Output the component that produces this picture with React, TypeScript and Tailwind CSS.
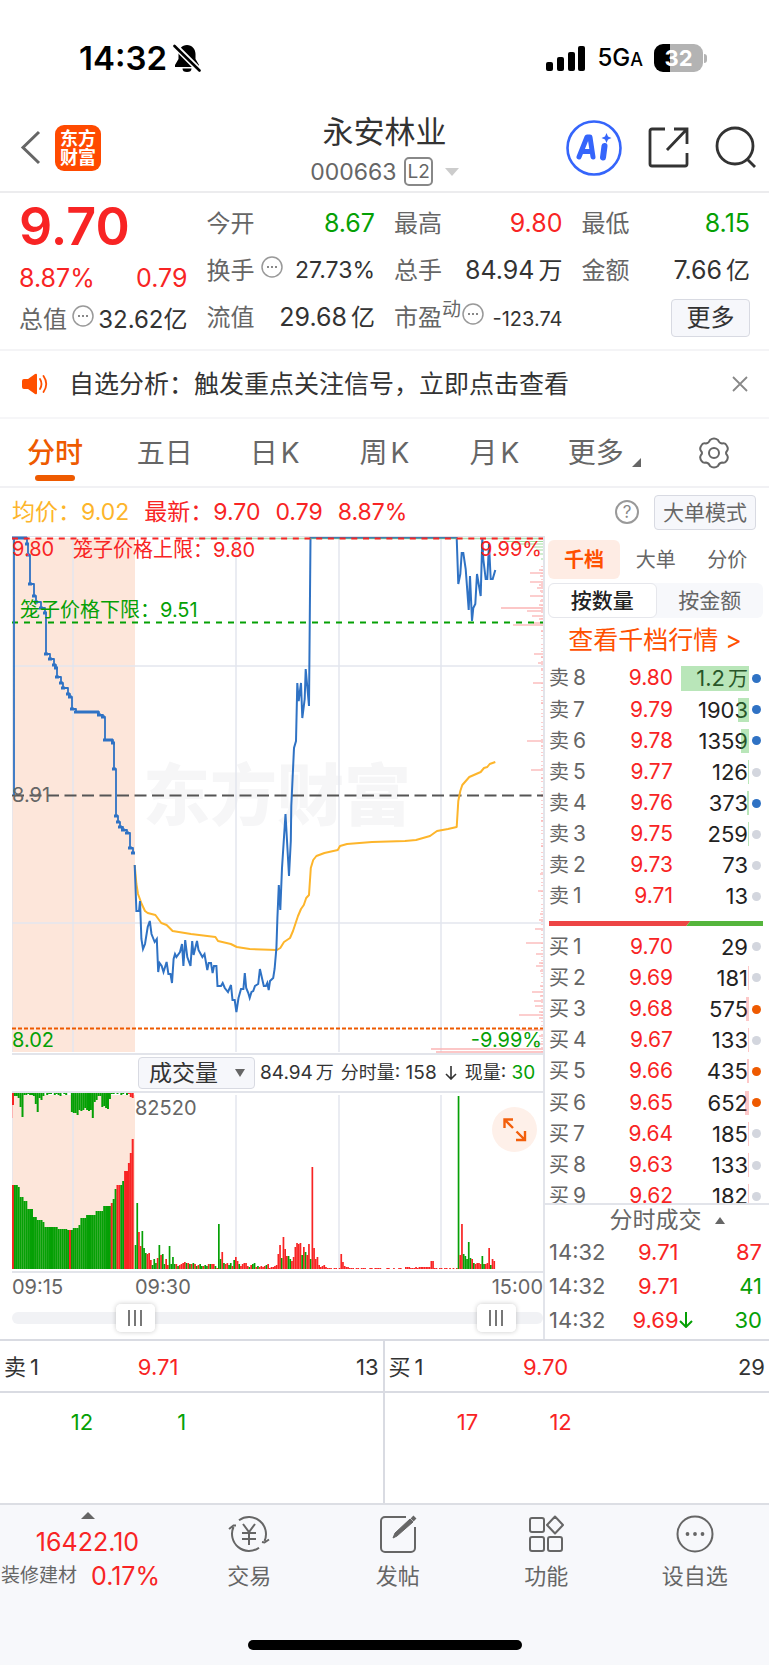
import { useState } from 'react';

type Level = { name: string; price: string; qty: string; unit?: string; bar: number; dot: string };

const RED = 'text-[#f82424]';
const GREEN = 'text-[#05a005]';

const DOT_BLUE = 'bg-[#2f72c4]';
const DOT_ORANGE = 'bg-[#ee5a00]';
const DOT_GRAY = 'bg-[#d3d6de]';

const sells: Level[] = [
  { name: '卖8', price: '9.80', qty: '1.2', unit: '万', bar: 68, dot: DOT_BLUE },
  { name: '卖7', price: '9.79', qty: '1903', bar: 11, dot: DOT_BLUE },
  { name: '卖6', price: '9.78', qty: '1359', bar: 8, dot: DOT_BLUE },
  { name: '卖5', price: '9.77', qty: '126', bar: 1, dot: DOT_GRAY },
  { name: '卖4', price: '9.76', qty: '373', bar: 2, dot: DOT_BLUE },
  { name: '卖3', price: '9.75', qty: '259', bar: 1, dot: DOT_GRAY },
  { name: '卖2', price: '9.73', qty: '73', bar: 0, dot: DOT_GRAY },
  { name: '卖1', price: '9.71', qty: '13', bar: 0, dot: DOT_GRAY },
];

const buys: Level[] = [
  { name: '买1', price: '9.70', qty: '29', bar: 0, dot: DOT_GRAY },
  { name: '买2', price: '9.69', qty: '181', bar: 1, dot: DOT_GRAY },
  { name: '买3', price: '9.68', qty: '575', bar: 3, dot: DOT_ORANGE },
  { name: '买4', price: '9.67', qty: '133', bar: 1, dot: DOT_GRAY },
  { name: '买5', price: '9.66', qty: '435', bar: 2, dot: DOT_ORANGE },
  { name: '买6', price: '9.65', qty: '652', bar: 4, dot: DOT_ORANGE },
  { name: '买7', price: '9.64', qty: '185', bar: 1, dot: DOT_GRAY },
  { name: '买8', price: '9.63', qty: '133', bar: 1, dot: DOT_GRAY },
  { name: '买9', price: '9.62', qty: '182', bar: 1, dot: DOT_GRAY },
];

const trades = [
  { time: '14:32', price: '9.71', qty: '87', color: RED, down: false },
  { time: '14:32', price: '9.71', qty: '41', color: GREEN, down: false },
  { time: '14:32', price: '9.69', qty: '30', color: GREEN, down: true },
];

// Call auction prices, drawn as steps
const auction: [number, number][] = [
  [2, 2], [13, 2], [15, 8], [16, 19], [18, 48], [22, 60], [24, 66], [29, 72], [33, 77], [34, 118],
  [38, 123], [42, 129], [44, 132], [45, 141], [49, 147], [51, 152], [56, 158], [58, 161], [60, 173],
  [64, 176], [85, 176], [87, 179], [91, 181], [93, 204], [99, 204], [101, 207], [102, 233],
  [104, 280], [106, 286], [108, 291], [111, 294], [115, 297], [118, 312], [121, 317],
];
const auctionPath = 'M2 259V2' + auction.map(([x, y]) => `H${x}V${y}`).join('') + 'H123';
const auctionMarks = auction.map(([x, y]) => `M${x - 2} ${y}h4`).join('') + 'M2 2H13M64 176H85M93 204H99';

const priceLine =
  '122.7,329 124.4,375 127,375 128,365 129.4,403 131,413 133,408 135.7,391 137.8,385 139.5,398 142.7,406 144.8,403 146.2,436 147.6,427 149.7,430 151.5,436 154.6,426 156.4,438 158.5,438 160,447 161.6,423 163,418 164.4,421 168,416 170,408 171.4,430 173.2,404 175.3,421 178.5,430 180.2,405 181.6,419 185,405 186.5,414 190.4,421 192.5,418 195.3,434 196.7,427 199,427 200.6,437 202,430 204.4,430 205.5,450 209,450 210.7,447 212.8,452 216,456 219,449 220.5,464 222.7,464 224.4,476 226.5,462 229,453 231.4,453 232.8,437 234.2,452 236.3,457 237.7,462 239.5,456 241.2,455 243,450 246.2,448 247.9,433 251.8,450 253.9,450 255.3,447 256.7,454 258,445 261.2,442 262.6,433 264.4,412 265.4,382 266.8,349 268.3,374 270,332 273.5,278 277,340 278.8,305 279.3,270 282,212 284,205 285.3,147 286.7,165 289,147 290.3,182 292.7,163 293.7,133 297,170 298.5,2 444.7,2 446.3,48 448.3,38 449.7,17 451.3,17 453.7,33 456.7,74 458,40 460,85 461.3,72 463.3,68 465,38 468.7,60 470.3,2 471.3,23 473.7,43 475.3,43 477,8 478.7,43 480.7,43 483.3,34';

const averageLine =
  '122.7,329 124.4,348 126,358 129.7,368 133,375 135.7,377 143.4,379 149.3,387 154.6,389 160.6,395 179,398 203.4,401 206,405 218.8,408 224.8,411 237.7,413 265,414 268.3,412 272,406 278,402 281,395 286,380 289,373 291.8,369 294.2,362 297,359 298.8,332 301.2,324 304.4,320 312.4,317 325.8,314 328,310 335,308 360,306 393,305 404,304 418,300 425,295 436,293 444.7,291 446.3,265 448.3,255 450.3,249 457.3,241 468.7,236 472,232 475.3,231 477.7,228 483.3,226';

// Volume by price on the right edge: [y, length]
const profile: [number, number][] = [
  [34, 4], [37, 13], [40, 3], [46, 13], [49, 4], [52, 6], [55, 3], [60, 13], [65, 3], [69, 4], [72, 42],
  [75, 16], [80, 11], [83, 4], [87, 10], [89, 30], [95, 2], [118, 9], [121, 2], [127, 5], [133, 2],
  [147, 10], [167, 2], [205, 16], [210, 2], [234, 12], [242, 2], [260, 2], [285, 2], [310, 2], [338, 3],
  [355, 5], [378, 3], [384, 4], [393, 8], [407, 17], [418, 7], [427, 4], [430, 7], [435, 3], [450, 3],
  [456, 11], [460, 3], [465, 9], [470, 8], [476, 4], [479, 24], [482, 4], [494, 25], [500, 4],
  [508, 8], [513, 112], [516, 107],
];

// Order volume in the auction: control points of the top edge, [x, height]
const auctionEdge: [number, number][] = [
  [0, 84], [5, 82], [8, 72], [12, 68], [16, 60], [21, 52], [25, 49], [31, 47], [33, 42], [40, 42],
  [46, 40], [55, 39], [60, 41], [67, 44], [69, 51], [75, 54], [83, 58], [91, 63], [98, 66], [100, 70],
  [102, 80], [105, 84], [111, 88], [113, 98], [116, 106], [118, 116], [120, 130],
];
const unmatched = [
  12, 3, 3, 5, 14, 24, 2, 2, 1, 2, 2, 3, 11, 19, 5, 7, 3, 0, 2, 1, 1, 0, 2, 1, 2, 3, 0, 1, 2, 0, 0, 19,
  20, 20, 22, 17, 18, 17, 15, 17, 18, 17, 25, 9, 7, 3, 3, 14, 13, 15, 16, 6, 1, 1, 0, 1, 0, 2, 1, 0, 2, 1, 4, 5,
];

// Volume per minute, negative when the price fell
const minutes = [
  -24, -66, 37, 23, -38, -21, -16, 15, 16, 9, -4, -10, -6, 11, -24, 14, -15, -5, 10, 4, -23, -5, -12, -5, 5,
  -3, 4, 5, 6, 7, -6, 6, -5, 5, -6, 5, -3, 4, -5, -3, 3, -4, -3, 5, -5, 5, 5, -3, 1, -45, -10, 17, -6, 5, 6,
  -4, -6, 3, -9, 12, 8, -5, 3, 5, 6, 6, 3, -2, 4, -5, -6, 2, -3, 2, 3, 2, 3, -4, 5, 1, 2, 2, 3, 4, 15, 24,
  -11, 32, 20, 13, -13, -10, 8, 12, 22, 26, 25, 26, -14, 22, -17, 14, 25, -10, 102, 21, 10, 12, 4, 2, 3, 4, 2,
  1, 1, 1, 0, 1, 1, 0, 1, 15, 7, 3, 2, 2, 1, 1, 1, 0, 1, 1, 0, 1, 1, 1, 0, 0, 1, 1, 0, 1, 1, 1, 1, 0, 0, 0,
  1, 1, 0, 0, 1, 0, 0, 1, 1, 0, 0, 2, 2, 2, 1, 1, 1, 2, 1, 2, 2, 2, 2, 2, 2, 2, 8, 8, 1, 1, 0, 1, 1, 0, 1, 1,
  0, 1, 0, 1, 0, 1, -173, 14, 45, -15, -13, -10, -27, -11, 10, -6, 5, 6, 6, 5, -13, -5, 5, 6, 21, -4, 10, 8,
];

function edgeAt(x: number) {
  let h = auctionEdge[0][1];
  for (const [px, ph] of auctionEdge) if (px <= x + 1) h = ph;
  return h;
}

const isRed = (x: number) => x < 1 || (x > 56 && x < 58) || (x > 98 && x < 100) || (x > 104 && x < 107) || x > 111;

function StatusBar() {
  return (
    <div className="flex h-[104px] items-center justify-between pt-3 pr-[62px] pl-[79px]">
      <div className="flex items-center gap-[6px]">
        <span className="text-[33px] leading-10 font-semibold text-black">14:32</span>
        <svg className="h-[28px] w-[28px]" viewBox="0 0 28 28">
          <path d="M14 1c-5 0-8.500 4-8.500 9v5L2 21v2h24v-2l-3.500-6v-5C22.500 5 19 1 14 1zM9.500 24.500h9a4.500 3.500 0 0 1-9 0z" />
          <path d="M1 1l26 26" stroke="#fff" strokeWidth="6" />
          <path d="M1.500 2l25 24.500" stroke="#000" strokeWidth="2.600" strokeLinecap="round" />
        </svg>
      </div>
      <div className="flex items-center gap-[11px] text-black">
        <svg className="h-[25px] w-[40px]" viewBox="0 0 40 25">
          <rect x="0" y="16" width="7" height="9" rx="2" />
          <rect x="11" y="11" width="7" height="14" rx="2" />
          <rect x="22" y="6" width="7" height="19" rx="2" />
          <rect x="32" y="0" width="7" height="25" rx="2" />
        </svg>
        <span className="text-2xl leading-8 font-medium">
          5G<span className="text-lg">A</span>
        </span>
        <div className="flex items-center gap-px">
          <div className="flex h-[28px] w-[49px] items-center justify-center rounded-[9px] bg-[linear-gradient(90deg,#000_16px,#b3b3b3_16px)] text-[22px] leading-7 font-bold text-white">
            32
          </div>
          <div className="h-[9px] w-[3px] rounded-r-full bg-[#b3b3b3]" />
        </div>
      </div>
    </div>
  );
}

function Header() {
  return (
    <header className="flex h-[89px] items-center justify-between border-b-2 border-[#ececee] px-[12px]">
      <div className="flex flex-1 items-center gap-[14px]">
        <button aria-label="返回" className="ml-2">
          <svg className="h-[35px] w-[21px]" viewBox="0 0 21 35" fill="none" stroke="#666" strokeWidth="3">
            <path d="M19 2L3 17.500L19 33" />
          </svg>
        </button>
        <div className="flex h-[46px] w-[46px] flex-col items-center justify-center rounded-[9px] bg-[#ff4a00] text-[18px] leading-[19px] font-bold text-white">
          <span>东方</span>
          <span>财富</span>
        </div>
      </div>
      <div className="flex flex-col items-center pt-[6px]">
        <h1 className="text-[31px] leading-[42px] text-[#333]">永安林业</h1>
        <button className="flex items-center text-[23px] leading-[38px] text-[#666]">
          000663
          <span className="ml-2 rounded-[5px] border-2 border-[#888] px-px text-[19px] leading-[25px]">L2</span>
          <svg className="ml-[12px] h-[8px] w-[14px]" viewBox="0 0 14 8">
            <path d="M0 0h14L7 8z" fill="#ccc" />
          </svg>
        </button>
      </div>
      <div className="flex flex-1 items-center justify-end">
        <button aria-label="AI助手">
          <svg className="h-[56px] w-[56px]" viewBox="0 0 56 56" fill="none">
            <circle cx="28" cy="28" r="26.500" stroke="#3565fb" strokeWidth="2.600" />
            <path d="M13 37l8-20h3l3 20M16 31.500h10" stroke="#3565fb" strokeWidth="5" strokeLinejoin="round" strokeLinecap="round" />
            <path d="M38.500 26l-1.500 11.500" stroke="#3565fb" strokeWidth="6" strokeLinecap="round" />
            <path d="M40.500 13l1.500 3.500l3.500 1.500l-3.500 1.500l-1.500 3.500l-1.500-3.500l-3.500-1.500l3.500-1.500z" fill="#3565fb" />
          </svg>
        </button>
        <button aria-label="分享" className="ml-[26px]">
          <svg className="h-[41px] w-[41px]" viewBox="0 0 41 41" fill="none" stroke="#333" strokeWidth="2.800">
            <path d="M17 2H4a2 2 0 0 0-2 2v33a2 2 0 0 0 2 2h33a2 2 0 0 0 2-2V26M26 2h13v15M39 2L19 23" />
          </svg>
        </button>
        <button aria-label="搜索" className="ml-[26px]">
          <svg className="h-[43px] w-[42px]" viewBox="0 0 42 43" fill="none" stroke="#333" strokeWidth="2.800">
            <circle cx="20" cy="20" r="18" />
            <path d="M32 33l8 8" />
          </svg>
        </button>
      </div>
    </header>
  );
}

function MoreInfo() {
  return (
    <svg className="mb-2 h-[22px] w-[22px] shrink-0" viewBox="0 0 22 22" fill="none">
      <circle cx="11" cy="11" r="10" stroke="#999" strokeWidth="1.500" />
      <path d="M6 11h2M10 11h2M14 11h2" stroke="#888" strokeWidth="2" />
    </svg>
  );
}

type QuoteProps = { label: string; value: string; unit?: string; color?: string };

function Quote({ label, value, unit, color = 'text-[#333]' }: QuoteProps) {
  return (
    <div className="flex h-[47px] items-center justify-between text-2xl">
      <span className="text-[#666]">{label}</span>
      <span className={`text-[25px] ${color}`}>
        {value}
        {unit && <span className="ml-1 text-2xl">{unit}</span>}
      </span>
    </div>
  );
}

function QuotePanel() {
  return (
    <section className="grid grid-cols-4 gap-x-[19px] border-b-2 border-[#f4f4f6] px-[19px] pt-[7px] pb-2 whitespace-nowrap">
      <div className={RED}>
        <div className="flex h-[53px] items-center text-[52px] leading-none font-semibold">9.70</div>
        <div className="flex h-[51px] items-center justify-between text-[25px]">
          <span>8.87%</span>
          <span>0.79</span>
        </div>
        <div className="flex h-[32px] items-center justify-between text-2xl text-[#333]">
          <span className="text-[#666]">总值</span>
          <MoreInfo />
          <span>32.62亿</span>
        </div>
      </div>
      <div>
        <Quote label="今开" value="8.67" color={GREEN} />
        <div className="flex h-[47px] items-center text-2xl">
          <span className="mr-[6px] text-[#666]">换手</span>
          <MoreInfo />
          <span className="ml-auto text-[23px] text-[#333]">27.73%</span>
        </div>
        <Quote label="流值" value="29.68" unit="亿" />
      </div>
      <div>
        <Quote label="最高" value="9.80" color={RED} />
        <Quote label="总手" value="84.94" unit="万" />
        <div className="flex h-[47px] items-center text-2xl">
          <span className="text-[#666]">市盈</span>
          <span className="mr-px self-start text-[19px] leading-8 text-[#666]">动</span>
          <MoreInfo />
          <span className="ml-auto pt-1 text-[20px] text-[#333]">-123.74</span>
        </div>
      </div>
      <div>
        <Quote label="最低" value="8.15" color={GREEN} />
        <Quote label="金额" value="7.66" unit="亿" />
        <div className="flex h-[47px] items-center justify-end">
          <button className="h-[38px] w-[79px] rounded-[4px] border border-[#d8dae2] bg-[#f6f7fb] text-2xl leading-none text-[#333]">
            更多
          </button>
        </div>
      </div>
    </section>
  );
}

function Notice() {
  return (
    <div className="flex h-[68px] items-center border-b-2 border-[#f6f6f8] pr-[21px] pl-[22px]">
      <svg className="h-[22px] w-[26px]" viewBox="0 0 26 22" fill="none">
        <path d="M2 6h4l7-5q2-1 2 1v18q0 2-2 1l-7-5H2q-2 0-2-2V8q0-2 2-2z" fill="#ff4f00" />
        <path d="M18 6q3 5 0 10M21.500 3q5.500 8 0 16" stroke="#ff4f00" strokeWidth="1.800" strokeLinecap="round" />
      </svg>
      <a href="#analysis" className="ml-[21px] text-[25px] leading-9 text-[#333]">
        自选分析：触发重点关注信号，立即点击查看
      </a>
      <button aria-label="关闭" className="ml-auto">
        <svg className="h-4 w-4" viewBox="0 0 16 16" stroke="#888" strokeWidth="1.800">
          <path d="M1 1l14 14M15 1L1 15" />
        </svg>
      </button>
    </div>
  );
}

function PeriodTabs() {
  const [active, setActive] = useState('分时');
  const tabs = ['分时', '五日', '日K', '周K', '月K'];
  return (
    <nav className="grid h-[69px] grid-cols-7 border-b-2 border-[#f1f1f4] text-[28px] text-[#666]">
      {tabs.map((tab) => (
        <button
          key={tab}
          onClick={() => setActive(tab)}
          className={`flex flex-col items-center pt-[14px] leading-[40px] ${active === tab ? 'font-medium text-[#ee5a00]' : ''}`}
        >
          <span>
            {tab[0]}
            <span className={tab[1] === 'K' ? 'ml-[3px]' : ''}>{tab[1]}</span>
          </span>
          {active === tab && <span className="mt-[2px] h-[6px] w-10 rounded-full bg-[#ee5a00]" />}
        </button>
      ))}
      <button className="flex items-start justify-center gap-2 pt-[14px] leading-[40px]">
        更多
        <svg className="mt-[25px] h-[9px] w-[9px]" viewBox="0 0 9 9">
          <path d="M9 0v9H0z" fill="#666" />
        </svg>
      </button>
      <button aria-label="设置" className="flex items-center justify-center">
        <svg className="h-8 w-8" viewBox="0 0 32 32" fill="none" stroke="#666" strokeWidth="2">
          <path d="M12 3q4-3 8 0q1 3 4 3.500q3-.500 4 1q3 4 1 6.500q-2 2 0 4q2 3-1 6.500q-1 1.500-4 1q-3 .500-4 3.500q-4 3-8 0q-1-3-4-3.500q-3 .500-4-1q-3-3.500-1-6.500q2-2 0-4q-2-2.500 1-6.500q1-1.500 4-1q3-.500 4-3.500z" />
          <circle cx="16" cy="16" r="5" />
        </svg>
      </button>
    </nav>
  );
}

function PriceChart() {
  return (
    <svg className="block w-full" viewBox="0 0 531 517" fontSize="20">
      <rect x="0" y="2" width="123" height="514" fill="#fde6da" />
      <g fontSize="67" fontWeight="900" fill="#f6f6f7">
        <text x="131" y="284">东方财富</text>
      </g>
      <path d="M61 0V516M224 0V516M327 0V516M429 0V516M0 130H531M0 387H531M0 0V516" stroke="#e3e6ee" strokeWidth="1.500" />
      <path d="M0 .500H531" stroke="#dfe2ea" />
      <g stroke="#fbb4b4" strokeWidth="1.300">
        {profile.map(([y, len]) => (
          <path key={y} d={`M${531 - len} ${y}H531`} />
        ))}
        <path d="M530 30V517" strokeDasharray="1 3 1 2 1 5" />
      </g>
      <path d="M488 5.500H531M503 8H531M520 11H531M524 14H531M528 18H531M529 23H531" stroke="#9fdc9f" />
      <path d="M0 259.500H531" stroke="#555" strokeWidth="1.800" strokeDasharray="12 5.500" />
      <path d="M0 86.500H531" stroke="#05a005" strokeWidth="2" strokeDasharray="6 6" />
      <path d="M0 492.500H531" stroke="#ee5a00" strokeWidth="2" strokeDasharray="4 2" />
      <g fill="none" strokeLinejoin="round">
        <polyline points={averageLine} stroke="#fdb52b" strokeWidth="2" />
        <path d={auctionPath} stroke="#2f72c4" strokeWidth="1.800" />
        <path d={auctionMarks} stroke="#2f72c4" strokeWidth="3" />
        <polyline points={priceLine} stroke="#2f72c4" strokeWidth="2" strokeLinejoin="miter" />
      </g>
      <path d="M183 2.500H531" stroke="#7cc47c" strokeWidth="1.500" strokeOpacity=".6" />
      <path d="M0 2.500H531" stroke="#f82424" strokeWidth="2" strokeDasharray="6 5.700" />
      <g fill="#f82424">
        <text x="0" y="20">9.80</text>
        <text x="61" y="21">笼子价格上限：9.80</text>
        <text x="530" y="20" textAnchor="end">9.99%</text>
      </g>
      <g fill="#05a005">
        <text x="8" y="81">笼子价格下限：9.51</text>
        <text x="0" y="511">8.02</text>
        <text x="530" y="511" textAnchor="end">-9.99%</text>
      </g>
      <text x="0" y="266" fill="#666">8.91</text>
    </svg>
  );
}

function VolumeChart() {
  const auctionBars = Array.from({ length: 64 }, (_, i) => i * 1.9);
  return (
    <div className="relative">
      <svg className="block w-full" viewBox="0 0 531 178" fontSize="20">
        <rect x="0" y="2" width="123" height="174" fill="#fde6da" />
        <path d="M61 2V176M224 2V176M327 2V176M429 2V176M0 0V176" stroke="#e3e6ee" strokeWidth="1.500" />
        {auctionBars.map((x, i) => (
          <g key={x}>
            <rect x={x} y={176 - edgeAt(x)} width="2" height={edgeAt(x)} fill={isRed(x) ? '#f82424' : '#05a005'} />
            <rect x={x} y="0" width="2" height={unmatched[i]} fill={i === 0 || i > 60 ? '#f82424' : '#05a005'} />
          </g>
        ))}
        <path d="M.500 12V25" stroke="#fbb4b4" />
        {minutes.map((v, i) => (
          <rect
            key={i}
            x={122.700 + i * 1.700}
            y={176 - Math.abs(v)}
            width="1.700"
            height={Math.abs(v)}
            fill={v < 0 ? '#05a005' : '#f82424'}
          />
        ))}
        <text x="123" y="22" fill="#666">82520</text>
      </svg>
      <button aria-label="放大" className="absolute top-[14px] right-[6px] h-[45px] w-[45px] rounded-full bg-[#fef0e9]">
        <svg className="h-full w-full" viewBox="0 0 45 45" fill="none" stroke="#f25f0c" strokeWidth="2.400">
          <path d="M21 21l-8.500-8.500M12.500 21v-8.500H21M24.500 24.500l8.500 8.500M33 24v9h-9" />
        </svg>
      </button>
    </div>
  );
}

const rangeClass =
  'pointer-events-none absolute inset-0 h-7 w-full appearance-none bg-transparent [&::-webkit-slider-thumb]:pointer-events-auto [&::-webkit-slider-thumb]:h-7 [&::-webkit-slider-thumb]:w-[39px] [&::-webkit-slider-thumb]:appearance-none [&::-webkit-slider-thumb]:rounded-[5px] [&::-webkit-slider-thumb]:shadow-[0_0_5px_rgba(0,0,0,0.22)] [&::-webkit-slider-thumb]:bg-[linear-gradient(90deg,#777_2px,transparent_2px,transparent_6px,#777_6px,#777_8px,transparent_8px,transparent_12px,#777_12px,#777_14px,transparent_14px),linear-gradient(#fff,#fff)] [&::-webkit-slider-thumb]:bg-[length:14px_16px,100%_100%] [&::-webkit-slider-thumb]:bg-center [&::-webkit-slider-thumb]:bg-no-repeat';

function TimeRange() {
  const [from, setFrom] = useState(211);
  const [to, setTo] = useState(945);
  return (
    <div className="relative mb-[7px] flex h-7 items-center">
      <div className="h-3 w-full rounded-full bg-[#f1f2f5]" />
      <input type="range" aria-label="开始时间" min={0} max={1000} value={from} onChange={(e) => setFrom(+e.target.value)} className={rangeClass} />
      <input type="range" aria-label="结束时间" min={0} max={1000} value={to} onChange={(e) => setTo(+e.target.value)} className={rangeClass} />
    </div>
  );
}

function ChartColumn() {
  return (
    <div className="min-w-0 border-r-2 border-[#e2e4ea] pl-[12px]">
      <PriceChart />
      <div className="flex h-[40px] items-center border-y-2 border-[#e2e4ea] pl-[126px] text-[19px] whitespace-nowrap text-[#333]">
        <div className="relative">
          <select
            aria-label="指标"
            defaultValue="成交量"
            className="block h-8 w-[117px] appearance-none rounded-[4px] border border-[#d8dae2] bg-[#f6f7fb] pl-[10px] text-[23px] leading-none"
          >
            <option>成交量</option>
          </select>
          <svg className="pointer-events-none absolute top-[12px] right-[10px] h-2 w-[10px]" viewBox="0 0 10 8">
            <path d="M0 0h10L5 8z" fill="#666" />
          </svg>
        </div>
        <span className="ml-[5px]">
          84.94<span className="ml-[3px] text-[18px]">万</span>
        </span>
        <span className="ml-[7px]">
          <span className="text-[18px]">分时量</span>: 158
        </span>
        <svg className="mx-2 h-[14px] w-3" viewBox="0 0 12 14" fill="none" stroke="#333" strokeWidth="1.600">
          <path d="M6 0v13M1 8l5 5l5-5" />
        </svg>
        <span>
          <span className="text-[18px]">现量</span>: <span className={GREEN}>30</span>
        </span>
      </div>
      <VolumeChart />
      <div className="flex h-[33px] border-t-2 border-[#e2e4ea] text-[20px] leading-[29px] text-[#666]">
        <span className="w-[123px]">09:15</span>
        <span>09:30</span>
        <span className="ml-auto">15:00</span>
      </div>
      <TimeRange />
    </div>
  );
}

function Levels({ rows, tint, height }: { rows: Level[]; tint: string; height: string }) {
  return (
    <table className={`w-full text-[22px] leading-6 ${height}`}>
      <tbody>
        {rows.map((row) => (
          <tr key={row.name}>
            <td className="w-[50px] p-0 pl-1 text-[20px] whitespace-nowrap text-[#666]">
              {row.name[0]}
              <span className="ml-1 text-[21px]">{row.name[1]}</span>
            </td>
            <td className={`p-0 text-right text-[21px] ${RED}`}>{row.price}</td>
            <td className="w-[75px] p-0 text-right text-[#222]">
              <div className="relative">
                {row.qty}
                {row.unit && <span className="ml-[3px] text-[20px]">{row.unit}</span>}
                <span className={`absolute inset-y-0 right-[-1px] ${tint}`} style={{ width: row.bar }} />
              </div>
            </td>
            <td className="w-[21px] p-0 pl-1">
              <span className={`block h-[9px] w-[9px] rounded-full ${row.dot}`} />
            </td>
          </tr>
        ))}
      </tbody>
    </table>
  );
}

function OrderBook() {
  return (
    <aside className="flex flex-col">
      <div className="mt-1 mr-[6px] ml-[3px] flex h-[39px] text-[20px] text-[#666]">
        <button className="w-[72px] rounded-[6px] bg-[#feece4] font-bold text-[#ff5000]">千档</button>
        <button className="flex-1">大单</button>
        <button className="flex-1">分价</button>
      </div>
      <div className="mt-1 mr-[6px] ml-[3px] flex h-[35px] rounded-[6px] bg-[#f7f8fb] text-[21px] leading-none text-[#666]">
        <button className="flex-1 rounded-[6px] border border-[#e6e7ec] bg-white font-medium text-[#222]">按数量</button>
        <button className="flex-1">按金额</button>
      </div>
      <a href="#levels" className="mt-1 mb-1 pr-1 text-center text-[25px] leading-9 text-[#ff5000]">
        查看千档行情 &gt;
      </a>
      <Levels rows={sells} tint="bg-[#37b637]/35" height="h-[250px]" />
      <svg className="mt-[9px] mr-[6px] ml-1 block h-[5px]" viewBox="0 0 215 5" preserveAspectRatio="none">
        <path d="M0 0H142L138 5H0z" fill="#ed4545" />
        <path d="M142 0H215V5H138z" fill="#55b53c" />
      </svg>
      <div className="mt-[5px] h-[272px] overflow-hidden">
        <Levels rows={buys} tint="bg-[#f82424]/25" height="h-[281px]" />
      </div>
      <button className="flex h-[32px] items-center justify-center gap-[13px] border-t-2 border-[#e2e4ea] pl-5 text-[23px] leading-none text-[#666]">
        分时成交
        <svg className="h-[7px] w-[10px]" viewBox="0 0 10 7">
          <path d="M0 7h10L5 0z" fill="#666" />
        </svg>
      </button>
      <table className="w-full text-[22px] leading-[34px]">
        <tbody>
          {trades.map((trade, i) => (
            <tr key={i}>
              <td className="p-0 pl-1 text-[#666]">{trade.time}</td>
              <td className={`w-[74px] p-0 text-right ${RED}`}>{trade.price}</td>
              <td className="w-4 p-0">
                {trade.down && (
                  <svg className="h-[16px] w-[14px]" viewBox="0 0 14 16" fill="none" stroke="#05a005" strokeWidth="2">
                    <path d="M7 0v15M1 9l6 6l6-6" />
                  </svg>
                )}
              </td>
              <td className={`w-[76px] p-0 pr-[7px] text-right ${trade.color}`}>{trade.qty}</td>
            </tr>
          ))}
        </tbody>
      </table>
    </aside>
  );
}

type BestQuoteProps = {
  name: string;
  price: string;
  qty: string;
  first: string;
  second: string;
  color: string;
  className?: string;
};

function BestQuote({ name, price, qty, first, second, color, className = '' }: BestQuoteProps) {
  return (
    <div className={className}>
      <div className="grid h-[52px] grid-cols-3 items-center border-b-2 border-[#d9dbe2] px-[4px] pt-[3px] text-[#333]">
        <span>{name[0]}<span className="ml-1">{name[1]}</span></span>
        <span className={`pl-[9px] ${RED}`}>{price}</span>
        <span className="text-right">{qty}</span>
      </div>
      <div className={`grid h-[110px] grid-cols-4 pt-[12px] pr-[10px] text-right leading-[34px] ${color}`}>
        <span>{first}</span>
        <span>{second}</span>
      </div>
    </div>
  );
}

function BottomNav() {
  return (
    <footer className="h-[163px] border-t-2 border-[#dcdee4] bg-[#f7f8fb]">
      <div className="flex text-[22px] leading-[34px] text-[#666]">
        <button className={`flex w-[175px] shrink-0 flex-col items-center pt-[7px] text-[25px] ${RED}`}>
          <svg className="h-[7px] w-[14px]" viewBox="0 0 14 7">
            <path d="M0 7h14L7 0z" fill="#666" />
          </svg>
          <span className="mt-[6px]">16422.10</span>
          <span className="flex w-full gap-[14px] whitespace-nowrap">
            <span className="pl-px text-[19px] text-[#666]">装修建材</span>0.17%
          </span>
        </button>
        <button className="flex flex-1 flex-col items-center pt-[9px]">
          <svg className="mb-[5px] h-[40px] w-[42px]" viewBox="0 0 42 40" fill="none" stroke="#666" strokeWidth="2">
            <path d="M11 6.300A17 17 0 0 1 36.500 27M31 33.700A17 17 0 0 1 5.500 13M1 15l4.500-3.500l2.500 0M41 25.500l-4.500 3l-2.500-.500" />
            <path d="M15 10l6 8l6-8M21 18v13M14 19h14M14 25h14" />
          </svg>
          交易
        </button>
        <button className="flex flex-1 flex-col items-center pt-[9px]">
          <svg className="mb-[5px] h-[40px] w-[38px]" viewBox="0 0 38 40" fill="none" stroke="#666" strokeWidth="2">
            <path d="M27 3H6a4 4 0 0 0-4 4v27a4 4 0 0 0 4 4h26a4 4 0 0 0 4-4V13" />
            <path d="M14 24l2-5L31 5l3 3L18 22z" fill="#666" strokeWidth="1" />
            <path d="M33 3l3 3" strokeWidth="4" />
          </svg>
          发帖
        </button>
        <button className="flex flex-1 flex-col items-center pt-[9px]">
          <svg className="mb-[5px] h-[40px] w-[36px]" viewBox="0 0 36 40" fill="none" stroke="#666" strokeWidth="2">
            <rect x="2" y="4" width="14" height="14" rx="2" />
            <rect x="2" y="23" width="14" height="14" rx="2" />
            <rect x="20" y="23" width="14" height="14" rx="2" />
            <path d="M27 2.500l8 8.500l-8 8.500l-8-8.500z" strokeLinejoin="round" />
          </svg>
          功能
        </button>
        <button className="flex flex-1 flex-col items-center pt-[9px]">
          <svg className="mb-[5px] h-[40px] w-[38px]" viewBox="0 0 38 40" fill="none">
            <circle cx="19" cy="20" r="17.500" stroke="#666" strokeWidth="2" />
            <g fill="#666">
              <circle cx="11.500" cy="20" r="1.900" />
              <circle cx="19" cy="20" r="1.900" />
              <circle cx="26.500" cy="20" r="1.900" />
            </g>
          </svg>
          设自选
        </button>
      </div>
      <div className="mx-auto mt-[47px] h-[10px] w-[274px] rounded-full bg-black" />
    </footer>
  );
}

export default function App() {
  return (
    <main className="w-full overflow-hidden bg-white font-[Inter,'Noto_Sans_CJK_SC',sans-serif]">
      <StatusBar />
      <Header />
      <QuotePanel />
      <Notice />
      <PeriodTabs />

      {/* Chart legend */}
      <div className="flex h-[48px] items-center pr-[13px] pl-[12px] text-[23px] whitespace-nowrap">
        <span className="text-[#fdb52b]">均价：9.02</span>
        <span className={`ml-[15px] ${RED}`}>最新：9.70</span>
        <span className={`ml-[15px] ${RED}`}>0.79</span>
        <span className={`ml-[15px] ${RED}`}>8.87%</span>
        <button aria-label="帮助" className="mr-[15px] ml-auto h-6 w-6 rounded-full border-2 border-[#999] text-[17px] leading-none text-[#888]">
          ?
        </button>
        <button className="h-[35px] w-[102px] rounded-[4px] border border-[#d8dae2] bg-[#f6f7fb] text-[21px] leading-none text-[#666]">
          大单模式
        </button>
      </div>

      <div className="grid grid-cols-[1fr_224px]">
        <ChartColumn />
        <OrderBook />
      </div>

      <section className="grid grid-cols-2 border-t-2 border-[#d9dbe2] text-[22px]">
        <BestQuote name="卖1" price="9.71" qty="13" first="12" second="1" color={GREEN} className="border-r-2 border-[#d9dbe2]" />
        <BestQuote name="买1" price="9.70" qty="29" first="17" second="12" color={RED} />
      </section>

      <BottomNav />
    </main>
  );
}
